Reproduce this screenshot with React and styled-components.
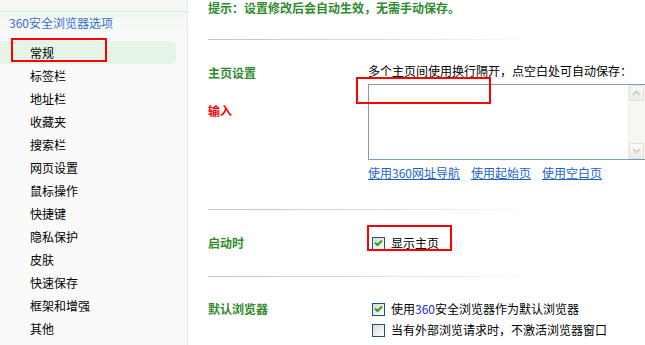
import React from "react";
import styled, { createGlobalStyle } from "styled-components";

const Global = createGlobalStyle`
  html, body { margin: 0; padding: 0; background: #fff; overflow: hidden; }
  body { font-family: "Noto Sans CJK SC", "Liberation Sans", sans-serif; font-size: 12px; color: #000; }
`;

const Page = styled.div`
  display: flex;
  width: 645px;
  height: 345px;
  overflow: hidden;
`;

const Sidebar = styled.div`
  width: 187px;
  flex: none;
  background: #fafafa;
  border-right: 1px solid #e8e8e8;
  display: flex;
  flex-direction: column;
`;

const TopStrip = styled.div`
  height: 11px;
  background: #f4f7f4;
  border-bottom: 1px solid #dcebdc;
`;

const SideHeader = styled.div`
  height: 23px;
  line-height: 21px;
  padding-left: 9px;
  color: #3a6fcf;
  font-size: 12px;
  background: linear-gradient(#f0f7f0, #fafafa);
`;

const NavList = styled.div`
  display: flex;
  flex-direction: column;
  padding-top: 6px;
`;

const NavItem = styled.div`
  position: relative;
  height: 23px;
  line-height: 23px;
  width: 176px;
  padding-left: 30px;
  box-sizing: border-box;
  border-radius: 0 5px 5px 0;
  background: ${(p) => (p.$active ? "#e6f4e6" : "transparent")};
`;

const Mark = styled.span`
  position: absolute;
  border: 2px solid #f00;
  pointer-events: none;
`;

const Main = styled.div`
  flex: 1;
  padding-left: 20px;
  display: flex;
  flex-direction: column;
`;

const Tip = styled.div`
  color: #2e8b2e;
  font-weight: bold;
  line-height: 15px;
`;

const Divider = styled.div`
  width: 330px;
  height: 1px;
  margin-top: ${(p) => p.$top}px;
  background: linear-gradient(to right, #b9c5d4, #dde3ea 60%, rgba(255, 255, 255, 0));
`;

const Section = styled.div`
  display: grid;
  grid-template-columns: 160px 1fr;
  margin-top: ${(p) => p.$top}px;
`;

const Label = styled.div`
  color: #2e8b2e;
  font-weight: bold;
  line-height: 16px;
`;

const Red = styled.div`
  color: #f00;
  font-weight: bold;
  line-height: 16px;
  margin-top: 22px;
`;

const Col = styled.div`
  display: flex;
  flex-direction: column;
  position: relative;
`;

const Hint = styled.div`
  line-height: 16px;
  height: 16px;
`;

const Area = styled.div`
  margin-top: 5px;
  width: 276px;
  height: 74px;
  border: 1px solid #7f9db9;
  display: flex;
  justify-content: flex-end;
  background: #fff;
`;

const Scroll = styled.div`
  width: 16px;
  display: flex;
  flex-direction: column;
  justify-content: space-between;
  background: #f7f6f2;
  border-left: 1px solid #f0efe8;
`;

const ScrollBtn = styled.div`
  width: 15px;
  height: 16px;
  box-sizing: border-box;
  border: 1px solid #e3e2da;
  border-radius: 2px;
  background: linear-gradient(#fbfbf8, #ecebe5);
  display: flex;
  align-items: center;
  justify-content: center;
`;

const Links = styled.div`
  display: flex;
  gap: 11px;
  margin-top: 5px;
  line-height: 16px;
`;

const Link = styled.a`
  color: #1d65c4;
  text-decoration: underline;
  cursor: pointer;
`;

const CheckRow = styled.label`
  display: flex;
  align-items: center;
  gap: 6px;
  height: 16px;
  line-height: 16px;
  margin-left: 4px;
  margin-top: ${(p) => p.$top || 0}px;
  position: relative;
`;

const Box = styled.span`
  width: 11px;
  height: 11px;
  border: 1px solid #1c5180;
  background: linear-gradient(135deg, #dcdcd6, #fbfbf9);
  display: flex;
  align-items: center;
  justify-content: center;
`;

const Blue = styled.span`
  color: #2929d4;
`;

const Check = ({ on }) => (
  <Box>
    {on && (
      <svg width="9" height="8" viewBox="0 0 9 8">
        <path d="M1 3.5 L3.5 6 L8 1.5" stroke="#21a321" strokeWidth="2" fill="none" />
      </svg>
    )}
  </Box>
);

const Chevron = ({ up }) => (
  <svg width="9" height="6" viewBox="0 0 9 6">
    <path d={up ? "M1 5 L4.5 1.5 L8 5" : "M1 1 L4.5 4.5 L8 1"} stroke="#c9c8c0" strokeWidth="1.6" fill="none" />
  </svg>
);

const items = ["常规", "标签栏", "地址栏", "收藏夹", "搜索栏", "网页设置", "鼠标操作", "快捷键", "隐私保护", "皮肤", "快速保存", "框架和增强", "其他"];

export default function App() {
  return (
    <>
      <Global />
      <Page>
        <Sidebar>
          <TopStrip />
          <SideHeader>360安全浏览器选项</SideHeader>
          <NavList>
            {items.map((t, i) => (
              <NavItem key={t} $active={i === 0}>
                {t}
                {i === 0 && <Mark style={{ left: 11, top: -3, width: 92, height: 20 }} />}
              </NavItem>
            ))}
          </NavList>
        </Sidebar>
        <Main>
          <Tip>提示：设置修改后会自动生效，无需手动保存。</Tip>
          <Divider $top={24} />
          <Section $top={23}>
            <div>
              <Label style={{ marginTop: 2 }}>主页设置</Label>
              <Red>输入</Red>
            </div>
            <Col>
              <Hint>多个主页间使用换行隔开，点空白处可自动保存：</Hint>
              <Area>
                <Scroll>
                  <ScrollBtn><Chevron up /></ScrollBtn>
                  <ScrollBtn><Chevron /></ScrollBtn>
                </Scroll>
              </Area>
              <Mark style={{ left: -12, top: 14, width: 131, height: 23 }} />
              <Links>
                <Link>使用360网址导航</Link>
                <Link>使用起始页</Link>
                <Link>使用空白页</Link>
              </Links>
            </Col>
          </Section>
          <Divider $top={28} />
          <Section $top={25}>
            <Label>启动时</Label>
            <Col>
              <CheckRow>
                <Check on />
                显示主页
                <Mark style={{ left: -5, top: -10, width: 81, height: 22 }} />
              </CheckRow>
            </Col>
          </Section>
          <Divider $top={25} />
          <Section $top={24}>
            <Label>默认浏览器</Label>
            <Col>
              <CheckRow>
                <Check on />
                <span>使用<Blue>360</Blue>安全浏览器作为默认浏览器</span>
              </CheckRow>
              <CheckRow $top={5}>
                <Check />
                当有外部浏览请求时，不激活浏览器窗口
              </CheckRow>
            </Col>
          </Section>
        </Main>
      </Page>
    </>
  );
}
